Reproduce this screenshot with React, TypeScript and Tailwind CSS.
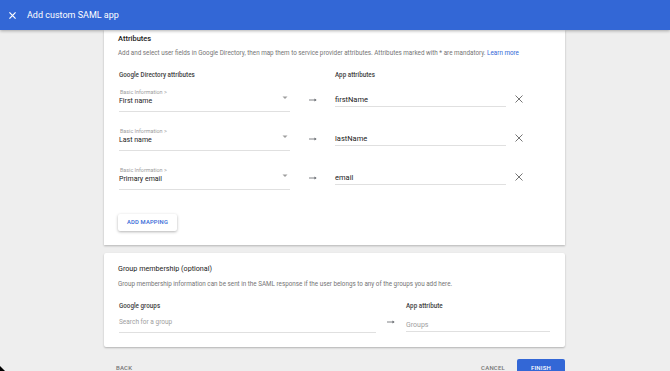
import React from "react";

const Arrow = ({ w = 9 }: { w?: number }) => (
  <svg width={w} height="6" viewBox="0 0 9 6" className="block">
    <path d="M0 3 H7" stroke="#5f6368" strokeWidth="0.9" />
    <path d="M6.2 1.3 L8.6 3 L6.2 4.7 Z" fill="#5f6368" />
  </svg>
);

const XIcon = ({ size = 8, color = "#757575", sw = 1 }: { size?: number; color?: string; sw?: number }) => (
  <svg width={size} height={size} viewBox="0 0 8 8" className="block">
    <path d="M0.5 0.5 L7.5 7.5 M7.5 0.5 L0.5 7.5" stroke={color} strokeWidth={sw} />
  </svg>
);

const rows = [
  { left: "First name", right: "firstName" },
  { left: "Last name", right: "lastName" },
  { left: "Primary email", right: "email" },
];

export default function App() {
  return (
    <div
      className="w-[670px] h-[371px] overflow-hidden bg-[#eeeeee] flex flex-col relative"
      style={{ fontFamily: "Roboto, 'Noto Sans', Arial, sans-serif" }}
    >
      {/* Header */}
      <div className="h-[30px] flex-none bg-[#3367d6] flex items-center shadow-[0_1px_3px_rgba(0,0,0,0.3)] z-10">
        <div className="ml-[9px] mr-[11px]">
          <XIcon size={7} color="#ffffff" sw={1.4} />
        </div>
        <span className="text-white text-[9px] leading-[12px]">Add custom SAML app</span>
      </div>

      {/* Card 1 */}
      <div className="w-[461px] ml-[104px] bg-white shadow-[0_1px_2px_rgba(0,0,0,0.25)] flex-none pb-[14px]">
        <div className="pl-[14px] pt-[4px] text-[7.5px] leading-[10px] font-medium text-[#212121]">Attributes</div>
        <div className="pl-[14px] mt-[5px] text-[6.3px] leading-[8px] text-[#757575] whitespace-nowrap">
          Add and select user fields in Google Directory, then map them to service provider attributes. Attributes marked
          with * are mandatory. <span className="text-[#3367d6]">Learn more</span>
        </div>
        <div className="pl-[15px] mt-[14px] flex text-[6.3px] leading-[8px] font-medium text-[#424242]">
          <div className="w-[216px]">Google Directory attributes</div>
          <div>App attributes</div>
        </div>
        <div className="mt-[7px] pl-[15px]">
          {rows.map((r) => (
            <div key={r.left} className="h-[39px] flex items-start">
              <div className="w-[171px] pt-[3px] pb-[5px] border-b border-[#e0e0e0]">
                <div className="h-[6px] text-[5.4px] leading-[6px] text-[#9e9e9e] pl-[1px]">Basic Information &gt;</div>
                <div className="mt-[1px] h-[10px] flex justify-between items-start">
                  <span className="text-[7px] leading-[10px] text-[#212121]">{r.left}</span>
                  <svg width="6" height="4" viewBox="0 0 6 4" className="mt-[0px] mr-[2px]">
                    <path d="M0.5 0.5 H5.5 L3 3 Z" fill="#9e9e9e" />
                  </svg>
                </div>
              </div>
              <div className="ml-[19px] mr-[18px] mt-[11px]">
                <Arrow w={8} />
              </div>
              <div className="w-[171px] mt-[9px] pb-[1px] border-b border-[#e0e0e0]">
                <div className="text-[7.5px] leading-[10px] text-[#212121]">{r.right}</div>
              </div>
              <div className="ml-[9px] mt-[9px]">
                <XIcon size={8} />
              </div>
            </div>
          ))}
        </div>
        <div className="ml-[14px] mt-[11px] w-[59px] h-[17px] bg-white rounded-[2px] shadow-[0_1px_3px_rgba(0,0,0,0.3)] flex items-center justify-center text-[5.8px] font-medium text-[#3367d6] tracking-[0.2px]">
          ADD MAPPING
        </div>
      </div>

      {/* Card 2 */}
      <div className="w-[461px] ml-[104px] mt-[8px] bg-white shadow-[0_1px_2px_rgba(0,0,0,0.25)] rounded-[2px] flex-none pt-[11px] pb-[14px]">
        <div className="pl-[14px] text-[7.2px] leading-[10px] text-[#212121]">Group membership (optional)</div>
        <div className="pl-[14px] mt-[6px] text-[6.3px] leading-[8px] text-[#757575] whitespace-nowrap">
          Group membership information can be sent in the SAML response if the user belongs to any of the groups you add
          here.
        </div>
        <div className="pl-[15px] mt-[14px] flex items-start">
          <div className="w-[257px]">
            <div className="text-[6.3px] leading-[8px] font-medium text-[#424242]">Google groups</div>
            <div className="mt-[7px] pb-[5px] border-b border-[#e0e0e0] text-[6.5px] leading-[10px] text-[#9e9e9e]">
              Search for a group
            </div>
          </div>
          <div className="ml-[11px] mr-[11px] mt-[17px]">
            <Arrow w={8} />
          </div>
          <div className="w-[144px]">
            <div className="text-[6.3px] leading-[8px] font-medium text-[#424242]">App attribute</div>
            <div className="mt-[10px] pb-[1px] border-b border-[#e0e0e0] text-[7px] leading-[10px] text-[#9e9e9e]">
              Groups
            </div>
          </div>
        </div>
      </div>

      {/* Footer */}
      <div className="w-[461px] ml-[104px] mt-[12px] flex items-center flex-none">
        <span className="ml-[12px] text-[6px] font-medium text-[#757575] tracking-[0.2px]">BACK</span>
        <div className="ml-auto flex items-center">
          <span className="text-[6px] font-medium text-[#757575] tracking-[0.2px]">CANCEL</span>
          <div className="ml-[12px] w-[48px] h-[16px] bg-[#3367d6] rounded-[2px] flex items-center justify-center text-[6px] font-medium text-white tracking-[0.2px]">
            FINISH
          </div>
        </div>
      </div>

      {/* window corner mark */}
      <svg width="5" height="5" viewBox="0 0 5 5" className="absolute left-0 bottom-0">
        <path d="M0 0 L5 5 H0 Z" fill="#000" />
      </svg>
    </div>
  );
}
